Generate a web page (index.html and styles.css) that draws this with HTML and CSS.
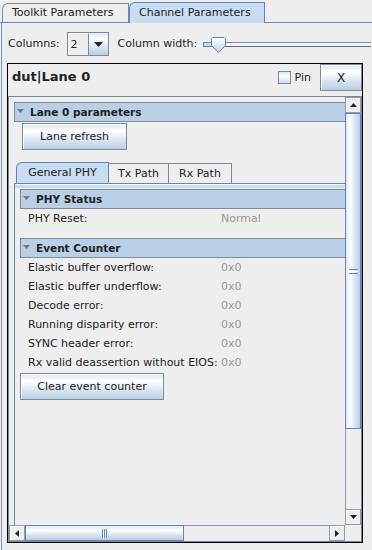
FILE: index.html
```html
<!DOCTYPE html>
<html lang="en">
<head>
    <meta charset="UTF-8">
    <title>Channel Parameters</title>
    <link rel="stylesheet" href="styles.css">
</head>
<body>
    <div class="tabs">
        <div class="tab toolkit">Toolkit Parameters</div>
        <div class="tab channel selected">Channel Parameters</div>
    </div>

    <div class="pane">
        <div class="toolbar">
            <span class="label columns">Columns:</span>
            <div class="combo">
                <span class="combo-value">2</span>
                <span class="combo-button">
                    <svg width="9" height="5" viewBox="0 0 9 5"><polygon points="0,0 9,0 4.5,5" fill="#222"/></svg>
                </span>
            </div>
            <span class="label">Column width:</span>
            <div class="slider">
                <svg width="168" height="24" viewBox="0 0 168 24">
                    <defs>
                        <linearGradient id="thumbFill" x1="0" y1="0" x2="0" y2="1">
                            <stop offset="0" stop-color="#ffffff"/>
                            <stop offset="0.5" stop-color="#dde8f3"/>
                            <stop offset="1" stop-color="#b8cfe5"/>
                        </linearGradient>
                    </defs>
                    <rect x="0.5" y="10.5" width="180" height="4" fill="#f4f4f4" stroke="#7a8a99"/>
                    <line x1="1" y1="14.5" x2="168" y2="14.5" stroke="#5f6b78"/>
                    <rect x="0.5" y="10.5" width="9" height="4" fill="#c8ddf2" stroke="#6382bf"/>
                    <polygon points="8.5,6.5 9.5,5.5 21.5,5.5 22.5,6.5 22.5,13.5 15.5,20.5 8.5,13.5" fill="url(#thumbFill)" stroke="#6382bf"/>
                </svg>
            </div>
        </div>

        <div class="panel">
            <div class="panel-head">
                <span class="panel-title">dut|Lane 0</span>
                <span class="pin"><span class="check"></span>Pin</span>
                <button class="button close">X</button>
            </div>

            <div class="scroll">
                <div class="viewport">
                    <div class="content">
                        <div class="section"><svg class="caret" width="7" height="4" viewBox="0 0 7 4"><polygon points="0,0 7,0 3.5,4" fill="#6f7a86"/></svg>Lane 0 parameters</div>
                        <button class="button refresh">Lane refresh</button>

                        <div class="inner-tabs">
                            <div class="itab selected">General PHY</div>
                            <div class="itab">Tx Path</div>
                            <div class="itab">Rx Path</div>
                        </div>
                        <div class="tab-body">
                            <div class="band"></div>
                            <div class="tab-inner">
                                <div class="section"><svg class="caret" width="7" height="4" viewBox="0 0 7 4"><polygon points="0,0 7,0 3.5,4" fill="#6f7a86"/></svg>PHY Status</div>
                                <div class="fields">
                                    <span>PHY Reset:</span><span class="val">Normal</span>
                                </div>

                                <div class="section gap"><svg class="caret" width="7" height="4" viewBox="0 0 7 4"><polygon points="0,0 7,0 3.5,4" fill="#6f7a86"/></svg>Event Counter</div>
                                <div class="fields">
                                    <span>Elastic buffer overflow:</span><span class="val">0x0</span>
                                    <span>Elastic buffer underflow:</span><span class="val">0x0</span>
                                    <span>Decode error:</span><span class="val">0x0</span>
                                    <span>Running disparity error:</span><span class="val">0x0</span>
                                    <span>SYNC header error:</span><span class="val">0x0</span>
                                    <span>Rx valid deassertion without EIOS:</span><span class="val">0x0</span>
                                </div>
                                <button class="button clear">Clear event counter</button>
                            </div>
                        </div>
                    </div>
                </div>

                <div class="vbar">
                    <div class="sb-btn"><svg width="7" height="4" viewBox="0 0 7 4"><polygon points="3.5,0 7,4 0,4" fill="#222"/></svg></div>
                    <div class="sb-track">
                        <div class="thumb v-thumb">
                            <span class="grip"></span>
                        </div>
                    </div>
                    <div class="sb-btn"><svg width="7" height="4" viewBox="0 0 7 4"><polygon points="0,0 7,0 3.5,4" fill="#222"/></svg></div>
                </div>

                <div class="hbar">
                    <div class="sb-btn"><svg width="4" height="7" viewBox="0 0 4 7"><polygon points="0,3.5 4,0 4,7" fill="#222"/></svg></div>
                    <div class="sb-track">
                        <div class="thumb h-thumb">
                            <span class="grip"></span>
                        </div>
                    </div>
                    <div class="sb-btn"><svg width="4" height="7" viewBox="0 0 4 7"><polygon points="0,0 4,3.5 0,7" fill="#222"/></svg></div>
                </div>

                <div class="corner"></div>
            </div>
        </div>
    </div>
</body>
</html>
```

FILE: styles.css
```css
* {
    box-sizing: border-box;
}
body {
    margin: 0;
    width: 372px;
    height: 550px;
    overflow: hidden;
    background: #eeeeee;
    font-family: "DejaVu Sans", sans-serif;
    font-size: 11px;
    color: #222;
}

/* outer tabs */
.tabs {
    display: flex;
    align-items: flex-end;
    height: 23px;
    padding-left: 2px;
    border-bottom: 1px solid #6382bf;
}
.tab {
    height: 19px;
    line-height: 18px;
    border: 1px solid #7a8a99;
    border-bottom: none;
    border-top-left-radius: 6px;
    padding-left: 9px;
    white-space: nowrap;
}
.toolkit {
    width: 127px;
}
.channel {
    width: 136px;
}
.tab.selected {
    height: 21px;
    margin-bottom: -1px;
    background: #c8ddf2;
    border-color: #6382bf;
    line-height: 19px;
}

.pane {
    height: 527px;
    margin-left: 1px;
    border-left: 1px solid #7f93b8;
    padding-left: 5px;
}

/* toolbar */
.toolbar {
    display: flex;
    align-items: flex-start;
    height: 40px;
    padding-top: 9px;
}
.label {
    line-height: 24px;
}
.columns {
    margin-left: 1px;
    margin-right: 7px;
}
.combo {
    display: flex;
    width: 42px;
    height: 24px;
    border: 1px solid #7a8a99;
    margin-right: 9px;
}
.combo-value {
    width: 21px;
    padding-left: 2px;
    line-height: 22px;
    border-left: 1px solid #fff;
    border-top: 1px solid #fff;
    border-right: 1px solid #7a8a99;
}
.combo-button {
    flex: 1;
    display: flex;
    align-items: center;
    justify-content: center;
    background: linear-gradient(#dde8f3, #ffffff 30%, #dde8f3 60%, #b8cfe5);
}
.slider {
    margin-left: 6px;
    height: 24px;
}
.slider svg {
    display: block;
}

/* channel panel */
.panel {
    width: 356px;
    height: 480px;
    border: 1px solid #000;
    display: flex;
    flex-direction: column;
}
.panel-head {
    display: flex;
    align-items: flex-start;
    height: 32px;
    flex-shrink: 0;
}
.panel-title {
    padding-left: 4px;
    line-height: 26px;
    font-size: 13px;
    font-weight: bold;
}
.pin {
    margin-left: auto;
    display: flex;
    align-items: center;
    gap: 4px;
    height: 26px;
}
.check {
    width: 13px;
    height: 13px;
    border: 1px solid #7a8a99;
    background: linear-gradient(#dde8f3, #ffffff 40%, #c8ddf2);
}
.button {
    font-family: "DejaVu Sans", sans-serif;
    font-size: 11px;
    color: #222;
    padding: 0;
    border: 1px solid #7a8a99;
    background: linear-gradient(#dde8f3, #ffffff 30%, #dde8f3 60%, #b8cfe5);
    box-shadow: inset 1px 1px 0 #fff;
}
.close {
    width: 42px;
    height: 27px;
    margin-left: 9px;
    font-size: 12px;
}

/* scroll pane */
.scroll {
    flex: 1;
    min-height: 0;
    border: 1px solid #7a8a99;
    display: grid;
    grid-template-columns: 1fr 16px;
    grid-template-rows: 1fr 16px;
}
.viewport {
    overflow: hidden;
}
.content {
    width: 640px;
    padding: 5px 0 0 5px;
}
.section {
    display: flex;
    align-items: center;
    height: 20px;
    border: 1px solid #7f8a96;
    background: #b8cfe5;
    padding-left: 2px;
    font-weight: bold;
    font-size: 10.5px;
}
.caret {
    margin-right: 6px;
    margin-top: -2px;
}
.refresh {
    display: block;
    width: 105px;
    height: 27px;
    margin: 1px 0 0 8px;
}

.inner-tabs {
    display: flex;
    align-items: flex-end;
    height: 21px;
    margin-top: 12px;
    padding-left: 2px;
}
.itab {
    height: 20px;
    line-height: 19px;
    border: 1px solid #7a8a99;
    border-bottom: none;
    border-left: none;
    text-align: center;
    width: 60px;
}
.itab:nth-child(3) {
    width: 63px;
}
.itab.selected {
    width: 93px;
    height: 21px;
    line-height: 20px;
    border: 1px solid #6382bf;
    border-bottom: none;
    border-top-left-radius: 6px;
    background: #c8ddf2;
}
.tab-body {
    height: 400px;
    border-left: 1px solid #6382bf;
    border-top: 1px solid #6382bf;
}
.band {
    height: 5px;
    border-top: 1px solid #f4f8fc;
    background: #c8ddf2;
    border-bottom: 1px solid #eeeeee;
}
.tab-inner {
    padding-left: 5px;
}
.fields {
    display: grid;
    grid-template-columns: 193px auto;
    grid-auto-rows: 19px;
    align-items: center;
    padding-left: 8px;
    white-space: nowrap;
}
.val {
    color: #999;
}
.section.gap {
    margin-top: 10px;
}
.clear {
    display: block;
    width: 144px;
    height: 27px;
    margin-top: 1px;
}

/* scrollbars */
.vbar,
.hbar {
    display: flex;
    background: #eeeeee;
}
.vbar {
    flex-direction: column;
}
.sb-btn {
    width: 16px;
    height: 16px;
    flex-shrink: 0;
    display: flex;
    align-items: center;
    justify-content: center;
    border: 1px solid #8c9aae;
    box-shadow: inset 1px 1px 0 #fff;
}
.sb-track {
    flex: 1;
    display: flex;
}
.vbar .sb-track {
    flex-direction: column;
    border-left: 1px solid #8c9aae;
}
.hbar .sb-track {
    border-top: 1px solid #8c9aae;
}
.thumb {
    border: 1px solid #6382bf;
    display: flex;
    align-items: center;
    justify-content: center;
}
.v-thumb {
    height: 316px;
    margin-left: -1px;
    background: linear-gradient(to right, #dde8f3, #ffffff 30%, #dde8f3 60%, #b8cfe5);
}
.h-thumb {
    width: 159px;
    margin-top: -1px;
    background: linear-gradient(#dde8f3, #ffffff 30%, #dde8f3 60%, #b8cfe5);
}
.v-thumb .grip {
    width: 9px;
    height: 5px;
    border-top: 1px solid #6382bf;
    border-bottom: 1px solid #6382bf;
    background: linear-gradient(#fff 0 1px, #6382bf 1px 2px, #fff 2px);
    background-size: 100% 1px;
    background-position: 0 1px;
    background-repeat: no-repeat;
}
.h-thumb .grip {
    width: 5px;
    height: 9px;
    border-left: 1px solid #6382bf;
    border-right: 1px solid #6382bf;
    background: linear-gradient(to right, #fff 0 1px, #6382bf 1px 2px, #fff 2px 3px);
}
.corner {
    background: #eeeeee;
}
```
